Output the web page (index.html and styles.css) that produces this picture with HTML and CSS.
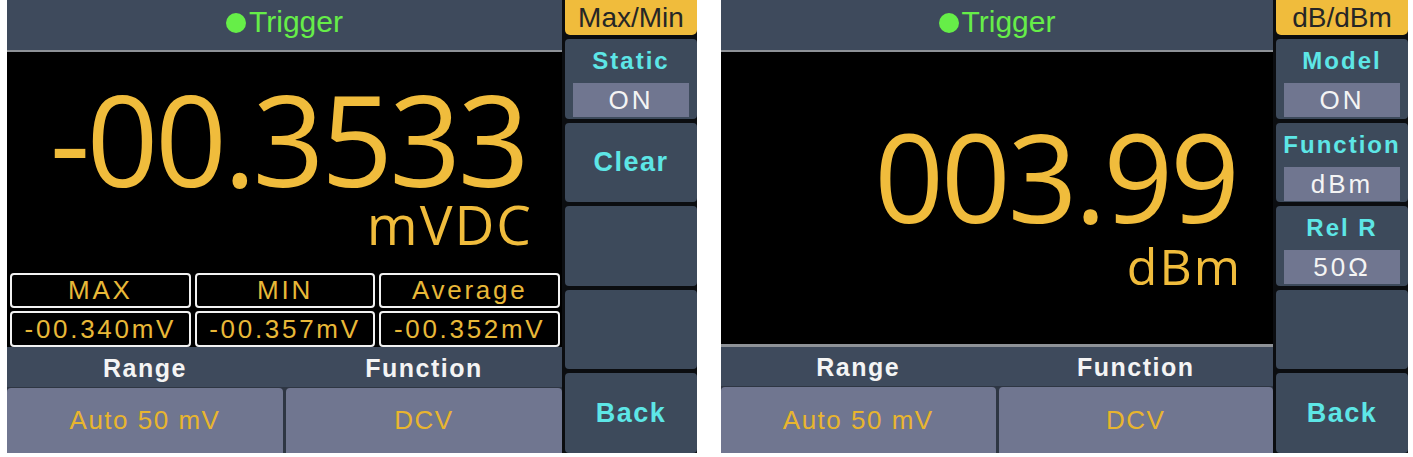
FILE: index.html
```html
<!DOCTYPE html>
<html lang="en">

<head>
    <meta charset="UTF-8">
    <meta name="viewport" content="width=device-width, initial-scale=1.0">
    <title>Multimeter screens</title>
    <link rel="stylesheet" href="styles.css">
</head>

<body>

    <div class="screens">

        <!-- Max/Min statistics screen -->
        <section class="screen screen-stats">
            <div class="main">
                <div class="topbar"><span class="dot"></span>Trigger</div>
                <div class="display">
                    <div class="reading">-00.3533</div>
                    <div class="unit">mVDC</div>
                </div>
                <div class="stats">
                    <div class="cell">MAX</div>
                    <div class="cell">MIN</div>
                    <div class="cell">Average</div>
                    <div class="cell">-00.340mV</div>
                    <div class="cell">-00.357mV</div>
                    <div class="cell">-00.352mV</div>
                </div>
                <div class="labels">
                    <span>Range</span>
                    <span>Function</span>
                </div>
                <div class="values">
                    <div class="value-btn">Auto 50 mV</div>
                    <div class="value-btn">DCV</div>
                </div>
            </div>
            <div class="side">
                <div class="mode">Max/Min</div>
                <div class="key">
                    <div class="key-label">Static</div>
                    <div class="key-value">ON</div>
                </div>
                <div class="key key-single">Clear</div>
                <div class="key"></div>
                <div class="key"></div>
                <div class="key key-single">Back</div>
            </div>
        </section>

        <!-- dB/dBm screen -->
        <section class="screen screen-dbm">
            <div class="main">
                <div class="topbar"><span class="dot"></span>Trigger</div>
                <div class="display">
                    <div class="reading">003.99</div>
                    <div class="unit">dBm</div>
                </div>
                <div class="labels">
                    <span>Range</span>
                    <span>Function</span>
                </div>
                <div class="values">
                    <div class="value-btn">Auto 50 mV</div>
                    <div class="value-btn">DCV</div>
                </div>
            </div>
            <div class="side">
                <div class="mode">dB/dBm</div>
                <div class="key">
                    <div class="key-label">Model</div>
                    <div class="key-value">ON</div>
                </div>
                <div class="key">
                    <div class="key-label">Function</div>
                    <div class="key-value">dBm</div>
                </div>
                <div class="key">
                    <div class="key-label">Rel R</div>
                    <div class="key-value">50Ω</div>
                </div>
                <div class="key"></div>
                <div class="key key-single">Back</div>
            </div>
        </section>

    </div>

</body>

</html>
```

FILE: styles.css
```css
body {
    background-color: #fff;
    font-family: "Liberation Sans", Arial, sans-serif;
    margin: 0;
    padding: 0;
}

.screens {
    display: flex;
    gap: 24px;
    padding-left: 7px;
}

.screen {
    display: flex;
    gap: 3px;
    height: 453px;
    background-color: #0b0d10;
}

.screen-stats {
    width: 690px;
}

.screen-dbm {
    width: 687px;
}

.main {
    flex: 1;
    display: flex;
    flex-direction: column;
    background-color: #000;
}

.topbar {
    height: 50px;
    line-height: 43px;
    background-color: #3e4a5c;
    border-bottom: 2px solid #8e9297;
    color: #66ee48;
    font-size: 30px;
    text-align: center;
}

.dot {
    display: inline-block;
    width: 20px;
    height: 20px;
    margin-right: 3px;
    border-radius: 50%;
    background-color: #66ee48;
    vertical-align: -1px;
}

.display {
    flex: 1;
    display: flex;
    flex-direction: column;
    align-items: flex-end;
    color: #f0bc3c;
    font-family: "Open Sans", sans-serif;
}

.reading {
    padding-right: 36px;
    font-size: 126px;
    line-height: 110px;
    letter-spacing: -3.7px;
}

.unit {
    padding-right: 29px;
    font-size: 55px;
    line-height: 55px;
    letter-spacing: 2px;
}

.screen-stats .display {
    padding-top: 31px;
}

.screen-stats .unit {
    margin-top: 3px;
}

.screen-dbm .display {
    padding-top: 69px;
    border-bottom: 3px solid #8e9297;
}

.screen-dbm .reading {
    font-size: 122px;
    letter-spacing: -3px;
}

.screen-dbm .unit {
    margin-top: 10px;
    padding-right: 31px;
    font-size: 50px;
    line-height: 50px;
}

.stats {
    display: grid;
    grid-template-columns: repeat(3, 1fr);
    grid-template-rows: 35px 36px;
    gap: 3px 4px;
    padding: 3px 2px 0 3px;
    height: 77px;
    box-sizing: border-box;
}

.cell {
    display: flex;
    align-items: center;
    justify-content: center;
    border: 2px solid #f2f2f2;
    border-radius: 4px;
    color: #e8b838;
    font-size: 26px;
    letter-spacing: 2.7px;
}

.labels {
    display: grid;
    grid-template-columns: 1fr 1fr;
    gap: 3px;
    height: 40px;
    line-height: 42px;
    background-color: #3e4a5c;
    color: #f4f4f4;
    font-size: 25px;
    font-weight: bold;
    letter-spacing: 1.5px;
    text-align: center;
}

.screen-dbm .labels {
    height: 39px;
    line-height: 40px;
}

.values {
    flex-shrink: 0;
    display: grid;
    grid-template-columns: 1fr 1fr;
    gap: 3px;
    height: 66px;
    padding-top: 1px;
    box-sizing: border-box;
    background-color: #2e3643;
}

.screen-dbm .values {
    height: 67px;
}

.value-btn {
    display: flex;
    align-items: center;
    justify-content: center;
    border-radius: 4px 4px 0 0;
    background-color: #707690;
    color: #e8b52e;
    font-size: 26px;
    letter-spacing: 1.5px;
}

.side {
    width: 132px;
    display: flex;
    flex-direction: column;
    gap: 4px;
}

.mode {
    height: 35px;
    line-height: 35px;
    border-radius: 0 0 5px 5px;
    background-color: #f0bc3c;
    color: #262626;
    font-size: 28px;
    text-align: center;
}

.key {
    flex: 1;
    display: flex;
    flex-direction: column;
    border-radius: 4px;
    background-color: #3d4a5b;
}

.key-label {
    height: 44px;
    line-height: 44px;
    color: #5de6e6;
    font-size: 24px;
    font-weight: bold;
    letter-spacing: 2px;
    text-align: center;
}

.key-value {
    height: 34px;
    line-height: 34px;
    margin: 0 8px;
    background-color: #707690;
    color: #f4f4f4;
    font-size: 26px;
    letter-spacing: 3px;
    text-align: center;
}

.key-single {
    justify-content: center;
    align-items: center;
    color: #5de6e6;
    font-size: 27px;
    font-weight: bold;
    letter-spacing: 1.5px;
}
```
